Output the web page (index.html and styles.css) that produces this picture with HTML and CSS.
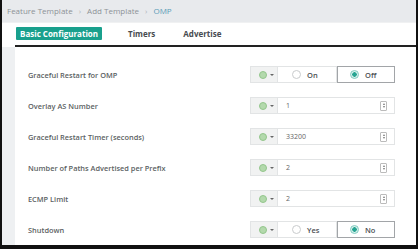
FILE: index.html
```html
<!DOCTYPE html>
<html>
<head>
<meta charset="utf-8">
<link rel="stylesheet" href="styles.css">
</head>
<body>
<div class="page">
  <div class="crumbs">
    <span>Feature Template</span><span class="sep">›</span><span>Add Template</span><span class="sep">›</span><span class="cur">OMP</span>
  </div>
  <div class="tabs">
    <span class="tab active">Basic Configuration</span>
    <span class="tab">Timers</span>
    <span class="tab">Advertise</span>
  </div>
  <div class="rule"></div>
  <div class="content">
    <div class="strip"></div>
    <div class="panel">
      <div class="row">
        <div class="label">Graceful Restart for OMP</div>
        <div class="ctrl">
          <div class="dd"><span class="dot"></span><span class="caret"></span></div>
          <div class="radios">
            <div class="opt"><span class="radio"></span>On</div>
            <div class="opt sel"><span class="radio on"></span>Off</div>
          </div>
        </div>
      </div>
      <div class="row">
        <div class="label">Overlay AS Number</div>
        <div class="ctrl">
          <div class="dd"><span class="dot"></span><span class="caret"></span></div>
          <div class="input"><span>1</span><span class="spin"><i class="up"></i><i class="down"></i></span></div>
        </div>
      </div>
      <div class="row">
        <div class="label">Graceful Restart Timer (seconds)</div>
        <div class="ctrl">
          <div class="dd"><span class="dot"></span><span class="caret"></span></div>
          <div class="input"><span>33200</span><span class="spin"><i class="up"></i><i class="down"></i></span></div>
        </div>
      </div>
      <div class="row">
        <div class="label">Number of Paths Advertised per Prefix</div>
        <div class="ctrl">
          <div class="dd"><span class="dot"></span><span class="caret"></span></div>
          <div class="input"><span>2</span><span class="spin"><i class="up"></i><i class="down"></i></span></div>
        </div>
      </div>
      <div class="row">
        <div class="label">ECMP Limit</div>
        <div class="ctrl">
          <div class="dd"><span class="dot"></span><span class="caret"></span></div>
          <div class="input"><span>2</span><span class="spin"><i class="up"></i><i class="down"></i></span></div>
        </div>
      </div>
      <div class="row">
        <div class="label">Shutdown</div>
        <div class="ctrl">
          <div class="dd"><span class="dot"></span><span class="caret"></span></div>
          <div class="radios">
            <div class="opt"><span class="radio"></span>Yes</div>
            <div class="opt sel"><span class="radio on"></span>No</div>
          </div>
        </div>
      </div>
    </div>
  </div>
</div>
</body>
</html>
```

FILE: styles.css
```css
html, body {
  margin: 0;
  padding: 0;
  background: #111;
  width: 418px;
  height: 249px;
  overflow: hidden;
}
.page {
  margin-left: 2px;
  width: 414px;
  height: 245px;
  background: #fff;
  display: flex;
  flex-direction: column;
  font-family: "Open Sans", "Liberation Sans", sans-serif;
}
.crumbs {
  height: 22px;
  background: #e8eaed;
  display: flex;
  align-items: center;
  padding-left: 5px;
  font-size: 8px;
  color: #8d9297;
}
.crumbs .sep {
  margin: 0 6px;
  color: #b0b4b8;
}
.crumbs .cur {
  color: #5a9cb8;
}
.tabs {
  height: 24px;
  display: flex;
  align-items: center;
  padding-left: 14px;
  background: #fff;
  border-top: 1px solid #f0f1f2;
  box-sizing: border-box;
}
.tab {
  font-size: 8px;
  font-weight: 700;
  color: #474b50;
  margin-right: 28px;
  white-space: nowrap;
}
.tab.active {
  background: #19a08d;
  color: #fff;
  height: 13px;
  line-height: 13px;
  padding: 0 4px;
  border-radius: 1px;
  margin-right: 26px;
}
.rule {
  height: 2px;
  margin-left: 13px;
  background: #222;
}
.content {
  flex: 1;
  display: flex;
}
.strip {
  width: 13px;
  background: #eef0f2;
}
.panel {
  flex: 1;
  padding-top: 12px;
  padding-left: 13px;
}
.row {
  height: 31px;
  display: flex;
  align-items: center;
}
.label {
  width: 222px;
  font-size: 7.4px;
  font-weight: 600;
  color: #5b5f63;
}
.ctrl {
  display: flex;
  height: 17px;
}
.dd {
  width: 28px;
  height: 17px;
  box-sizing: border-box;
  background: #f1f2f2;
  border: 1px solid #e2e4e5;
  display: flex;
  align-items: center;
  padding-left: 8px;
  gap: 3px;
}
.dot {
  width: 6px;
  height: 6px;
  border-radius: 50%;
  background: #b3d9ac;
  border: 1px solid #93c68c;
}
.caret {
  width: 0;
  height: 0;
  border-left: 2px solid transparent;
  border-right: 2px solid transparent;
  border-top: 2px solid #666;
}
.input {
  width: 117px;
  height: 17px;
  box-sizing: border-box;
  border: 1px solid #e2e4e5;
  border-left: none;
  display: flex;
  align-items: center;
  justify-content: space-between;
  padding: 0 7px 0 8px;
  font-size: 7px;
  color: #666;
}
.spin {
  width: 5px;
  height: 8px;
  border: 1px solid #bbb;
  border-radius: 1px;
  display: flex;
  flex-direction: column;
  align-items: center;
  justify-content: center;
  gap: 1px;
}
.spin i {
  width: 0;
  height: 0;
  border-left: 1.5px solid transparent;
  border-right: 1.5px solid transparent;
}
.spin .up { border-bottom: 2px solid #777; }
.spin .down { border-top: 2px solid #777; }
.radios {
  display: flex;
  width: 117px;
}
.opt {
  flex: 1;
  height: 17px;
  box-sizing: border-box;
  border: 1px solid #e2e4e5;
  border-left: none;
  display: flex;
  align-items: center;
  padding-left: 14px;
  gap: 6px;
  font-size: 7.5px;
  font-weight: 600;
  color: #4c5054;
}
.opt.sel {
  border: 1px solid #a2a5a8;
  padding-left: 12px;
}
.radio {
  width: 7px;
  height: 7px;
  border-radius: 50%;
  border: 1px solid #c9cbcd;
  background: #fff;
  box-sizing: content-box;
}
.radio.on {
  border-color: #7fcbc0;
  background: radial-gradient(circle, #26a592 0 2px, #d9f0ec 2.5px);
}
```
